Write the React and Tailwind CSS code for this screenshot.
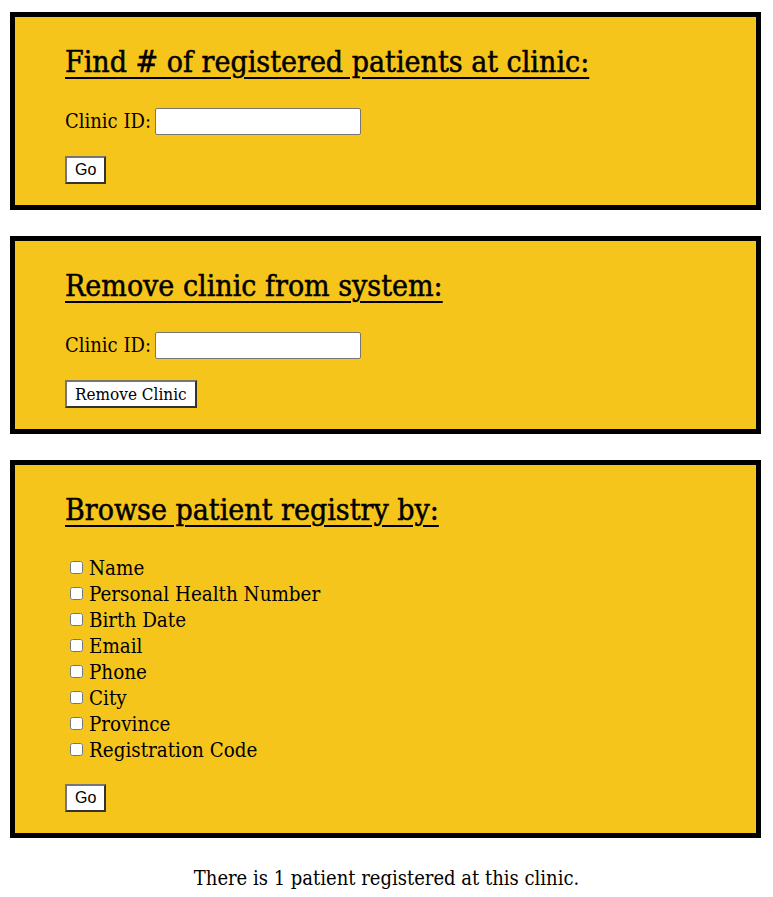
const slab = { fontFamily: '"Roboto Slab", "DejaVu Serif Condensed", "DejaVu Serif", serif' };

const Box = ({ title, children }) => (
  <section className="ml-[10px] mr-[12px] border-[5px] border-black bg-[#f6c51b] pl-[50px] pr-6 pt-[25px] pb-[21px]">
    <h2 className="text-[30px] leading-[40px] font-normal underline decoration-2 underline-offset-[5px] text-black [-webkit-text-stroke:0.5px_black]">{title}</h2>
    {children}
  </section>
);

const Input = () => (
  <input type="text" className="w-[206px] h-[27px] bg-white border border-[#767676] rounded-[2px] ml-1 px-1 text-base" />
);

const Button = ({ children, sans }) => (
  <button
    className={`h-[28px] px-[8px] bg-white border-2 border-t-[#767676] border-l-[#767676] border-r-[#333] border-b-[#333] text-black leading-none ${sans ? 'text-base' : 'text-[17px]'}`}
    style={sans ? { fontFamily: '"Liberation Sans", Arial, sans-serif' } : undefined}
  >
    {children}
  </button>
);

export default function App() {
  const fields = ['Name', 'Personal Health Number', 'Birth Date', 'Email', 'Phone', 'City', 'Province', 'Registration Code'];
  return (
    <div className="bg-white text-black pt-[12px] pb-4" style={slab}>
      <div className="flex flex-col gap-[26px]">
        <Box title="Find # of registered patients at clinic:">
          <div className="flex items-center h-[27px] mt-[26px] text-[20px] leading-[27px]">
            <label>Clinic ID:</label>
            <Input />
          </div>
          <div className="flex mt-[21px]"><Button sans>Go</Button></div>
        </Box>
        <Box title="Remove clinic from system:">
          <div className="flex items-center h-[27px] mt-[26px] text-[20px] leading-[27px]">
            <label>Clinic ID:</label>
            <Input />
          </div>
          <div className="flex mt-[21px]"><Button>Remove Clinic</Button></div>
        </Box>
        <Box title="Browse patient registry by:">
          <div className="flex flex-col mt-[25px] text-[20.4px] leading-[26px]">
            {fields.map((f) => (
              <label key={f} className="flex items-center h-[26px]">
                <input type="checkbox" className="w-[13px] h-[13px] ml-[5px] mr-[6px] -mt-[2px]" />
                <span>{f}</span>
              </label>
            ))}
          </div>
          <div className="flex mt-[21px]"><Button sans>Go</Button></div>
        </Box>
      </div>
      <p className="text-center text-[20px] leading-[26px] mt-[27px]">There is 1 patient registered at this clinic.</p>
    </div>
  );
}
